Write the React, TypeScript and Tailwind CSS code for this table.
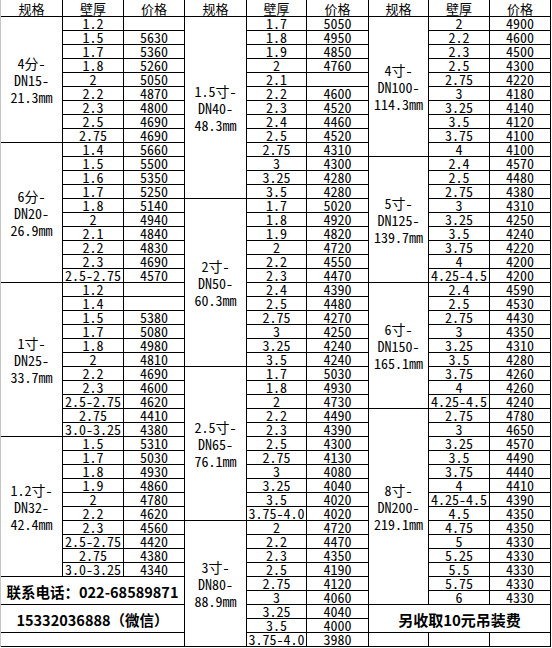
import React from "react";

type Row = [string, string];
type Group = { label: string[]; rows: Row[] };

const left: Group[] = [
  { label: ["4分-", "DN15-", "21.3mm"], rows: [["1.2", ""], ["1.5", "5630"], ["1.7", "5360"], ["1.8", "5260"], ["2", "5050"], ["2.2", "4870"], ["2.3", "4800"], ["2.5", "4690"], ["2.75", "4690"]] },
  { label: ["6分-", "DN20-", "26.9mm"], rows: [["1.4", "5660"], ["1.5", "5500"], ["1.6", "5350"], ["1.7", "5250"], ["1.8", "5140"], ["2", "4940"], ["2.1", "4840"], ["2.2", "4830"], ["2.3", "4690"], ["2.5-2.75", "4570"]] },
  { label: ["1寸-", "DN25-", "33.7mm"], rows: [["1.2", ""], ["1.4", ""], ["1.5", "5380"], ["1.7", "5080"], ["1.8", "4980"], ["2", "4810"], ["2.2", "4690"], ["2.3", "4600"], ["2.5-2.75", "4620"], ["2.75", "4410"], ["3.0-3.25", "4380"]] },
  { label: ["1.2寸-", "DN32-", "42.4mm"], rows: [["1.5", "5310"], ["1.7", "5030"], ["1.8", "4930"], ["1.9", "4860"], ["2", "4780"], ["2.2", "4620"], ["2.3", "4560"], ["2.5-2.75", "4420"], ["2.75", "4380"], ["3.0-3.25", "4340"]] },
];

const middle: Group[] = [
  { label: ["1.5寸-", "DN40-", "48.3mm"], rows: [["1.7", "5050"], ["1.8", "4950"], ["1.9", "4850"], ["2", "4760"], ["2.1", ""], ["2.2", "4600"], ["2.3", "4520"], ["2.4", "4460"], ["2.5", "4520"], ["2.75", "4310"], ["3", "4300"], ["3.25", "4280"], ["3.5", "4280"]] },
  { label: ["2寸-", "DN50-", "60.3mm"], rows: [["1.7", "5020"], ["1.8", "4920"], ["1.9", "4820"], ["2", "4720"], ["2.2", "4550"], ["2.3", "4470"], ["2.4", "4390"], ["2.5", "4480"], ["2.75", "4270"], ["3", "4250"], ["3.25", "4240"], ["3.5", "4240"]] },
  { label: ["2.5寸-", "DN65-", "76.1mm"], rows: [["1.7", "5030"], ["1.8", "4930"], ["2", "4730"], ["2.2", "4490"], ["2.3", "4390"], ["2.5", "4300"], ["2.75", "4130"], ["3", "4080"], ["3.25", "4040"], ["3.5", "4020"], ["3.75-4.0", "4020"]] },
  { label: ["3寸-", "DN80-", "88.9mm"], rows: [["2", "4720"], ["2.2", "4470"], ["2.3", "4350"], ["2.5", "4190"], ["2.75", "4120"], ["3", "4060"], ["3.25", "4040"], ["3.5", "4000"], ["3.75-4.0", "3980"]] },
];

const right: Group[] = [
  { label: ["4寸-", "DN100-", "114.3mm"], rows: [["2", "4900"], ["2.2", "4600"], ["2.3", "4500"], ["2.5", "4300"], ["2.75", "4220"], ["3", "4180"], ["3.25", "4140"], ["3.5", "4120"], ["3.75", "4100"], ["4", "4100"]] },
  { label: ["5寸-", "DN125-", "139.7mm"], rows: [["2.4", "4570"], ["2.5", "4480"], ["2.75", "4380"], ["3", "4310"], ["3.25", "4250"], ["3.5", "4240"], ["3.75", "4220"], ["4", "4200"], ["4.25-4.5", "4200"]] },
  { label: ["6寸-", "DN150-", "165.1mm"], rows: [["2.4", "4590"], ["2.5", "4530"], ["2.75", "4430"], ["3", "4350"], ["3.25", "4310"], ["3.5", "4280"], ["3.75", "4260"], ["4", "4260"], ["4.25-4.5", "4240"]] },
  { label: ["8寸-", "DN200-", "219.1mm"], rows: [["2.75", "4780"], ["3", "4650"], ["3.25", "4570"], ["3.5", "4490"], ["3.75", "4440"], ["4", "4410"], ["4.25-4.5", "4390"], ["4.5", "4350"], ["4.75", "4350"], ["5", "4330"], ["5.25", "4330"], ["5.5", "4330"], ["5.75", "4330"], ["6", "4330"]] },
];

const cell = "border-r border-b border-black flex items-center justify-center";
const num = "text-[14px] leading-[12px] underline decoration-1 underline-offset-[1px] whitespace-nowrap";

function Section({ groups, w }: { groups: Group[]; w: string[] }) {
  return (
    <div className="flex flex-col">
      <div className="flex h-[17px]">
        {["规格", "壁厚", "价格"].map((t, i) => (
          <div key={t} className={`${w[i]} ${cell} items-end text-[13px] leading-[15px]`}>
            {t}
          </div>
        ))}
      </div>
      {groups.map((g, gi) => (
        <div key={gi} className="flex">
          <div className={`${w[0]} ${cell} flex-col text-[14px] leading-[17px] pt-[1px]`}>
            {g.label.map((l) => (
              <div key={l} className="whitespace-nowrap">{l}</div>
            ))}
          </div>
          <div className="flex flex-col">
            {g.rows.map((r, ri) => (
              <div key={ri} className="flex h-[14px]">
                <div className={`${w[1]} ${cell} items-end pb-[1px]`}>
                  <span className={num}>{r[0]}</span>
                </div>
                <div className={`${w[2]} ${cell} items-end pb-[1px]`}>
                  <span className={num}>{r[1]}</span>
                </div>
              </div>
            ))}
          </div>
        </div>
      ))}
    </div>
  );
}

export default function App() {
  return (
    <div className="w-[552px] h-[648px] bg-white overflow-hidden text-black font-['Noto_Sans_Mono_CJK_SC','Liberation_Mono',monospace]">
      <div className="flex border-l border-[#c4c4c4] w-[551px]">
        <div className="flex flex-col">
          <Section groups={left} w={["w-[62px]", "w-[61px]", "w-[61px]"]} />
          <div className="w-[184px] h-[28px] border-r border-b border-black flex items-center justify-center pt-[3px] font-['Noto_Sans_CJK_SC',sans-serif] font-bold text-[14.5px] whitespace-nowrap">
            联系电话：022-68589871
          </div>
          <div className="w-[184px] h-[28px] border-r border-b border-black flex items-center justify-center pt-[3px] font-['Noto_Sans_CJK_SC',sans-serif] font-bold text-[14.5px] whitespace-nowrap">
            15332036888（微信）
          </div>
          <div className="w-[184px] h-[14px] border-r border-b border-black" />
        </div>
        <Section groups={middle} w={["w-[62px]", "w-[60px]", "w-[62px]"]} />
        <div className="flex flex-col">
          <Section groups={right} w={["w-[60px]", "w-[61px]", "w-[61px]"]} />
          <div className="w-[182px] h-[28px] border-r border-b border-black flex items-center justify-center pt-[4px] font-['Noto_Sans_CJK_SC',sans-serif] font-bold text-[15px] whitespace-nowrap">
            另收取10元吊装费
          </div>
          <div className="flex h-[14px]">
            <div className="w-[60px] border-r border-b border-black" />
            <div className="w-[61px] border-r border-b border-black" />
            <div className="w-[61px] border-r border-b border-black" />
          </div>
        </div>
      </div>
    </div>
  );
}
